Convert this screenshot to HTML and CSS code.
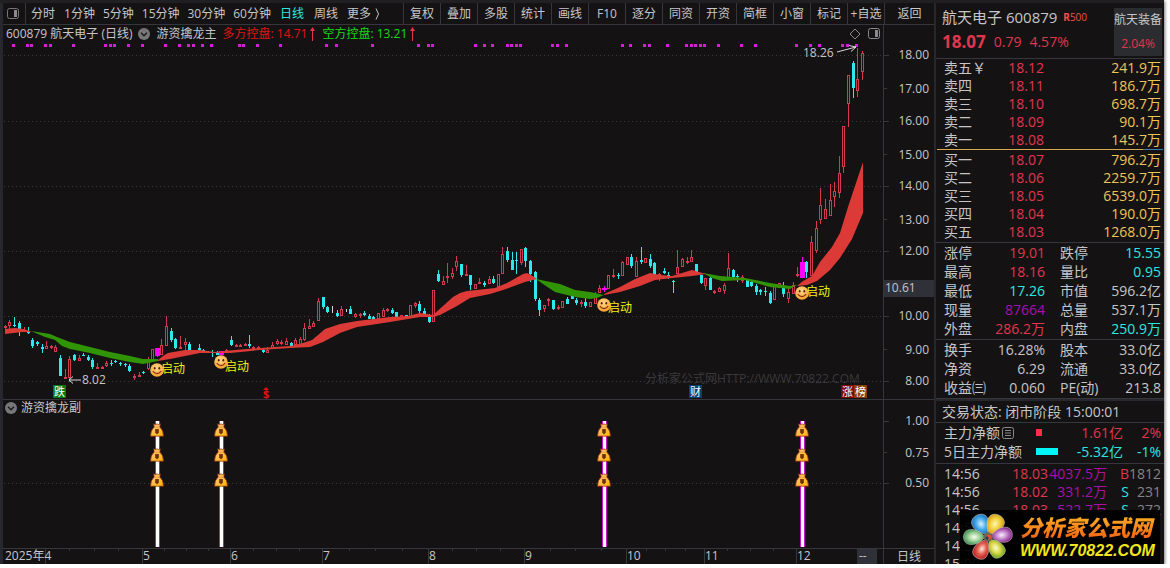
FILE: index.html
```html
<!DOCTYPE html>
<html lang="zh-CN">
<head>
    <meta charset="utf-8">
    <title>航天电子 600879</title>
    <link rel="stylesheet" href="styles.css">
</head>
<body>
    <!-- shared icons -->
    <svg class="defs" width="0" height="0">
        <defs>
            <radialGradient id="face-fill" cx="45%" cy="35%" r="65%">
                <stop offset="0" stop-color="#ffd98a"/>
                <stop offset="1" stop-color="#f7a02c"/>
            </radialGradient>
            <linearGradient id="bag-fill" x1="0" y1="0" x2="1" y2="1">
                <stop offset="0" stop-color="#ffc98a"/>
                <stop offset="1" stop-color="#ffb400"/>
            </linearGradient>
            <symbol id="face" viewBox="0 0 14 14">
                <circle cx="7" cy="7" r="6.8" fill="url(#face-fill)"/>
                <ellipse cx="4.7" cy="5.2" rx="0.9" ry="1.3" fill="#5a1d10"/>
                <ellipse cx="9.3" cy="5.2" rx="0.9" ry="1.3" fill="#5a1d10"/>
                <path d="M2.8 8.2 Q7 13 11.2 8.2" fill="none" stroke="#8a2a10" stroke-width="1.1"/>
            </symbol>
            <symbol id="bag" viewBox="0 0 14 14">
                <path d="M3.5 0.8 L5.5 1.6 L7 0.8 L8.5 1.6 L10.5 0.8 L9.8 4 Q13.5 7 13.5 13.2 L0.5 13.2 Q0.5 7 4.2 4 Z" fill="url(#bag-fill)" stroke="#8c1c08" stroke-width="0.7"/>
                <path d="M4.8 4.2 H9.3" stroke="#e08a40" stroke-width="0.7"/>
                <path d="M5 6 H9 V9.5 L7 11.5 L5 9.5 Z" fill="#8c4a12"/>
                <path d="M7 6.5 V10.5" stroke="#4a1c04" stroke-width="1"/>
            </symbol>
            <symbol id="toggle" viewBox="0 0 12 12">
                <circle cx="6" cy="6" r="6" fill="#77777a"/>
                <path d="M3 4.7 L6 7.7 L9 4.7" fill="none" stroke="#1b1b1c" stroke-width="1.4"/>
            </symbol>
            <symbol id="up" viewBox="0 0 7 14">
                <path d="M3.5 0 L6 4 H4 V14 H3 V4 H1 Z" fill="#e8334a"/>
            </symbol>
        </defs>
    </svg>

    <div class="app">
        <div class="main">
            <div class="toolbar">
                <button class="layout-btn" aria-label="布局"><svg width="13" height="12" viewBox="0 0 13 12"><rect x="0.5" y="0.5" width="11" height="10" rx="2" fill="none" stroke="#77777a"/><rect x="7" y="2" width="3" height="7" fill="#8c8c90"/></svg></button>
                <nav class="periods">
                    <button class="short">分时</button>
                    <button>1分钟</button>
                    <button>5分钟</button>
                    <button>15分钟</button>
                    <button>30分钟</button>
                    <button>60分钟</button>
                    <button class="short active">日线</button>
                    <button class="short">周线</button>
                    <button>更多<svg width="10" height="14" viewBox="0 0 10 14"><path d="M5 1.5 L7.5 7 L5 12.5" fill="none" stroke="#c6c6c8"/></svg></button>
                </nav>
                <div class="tools">
                    <button>复权</button>
                    <button>叠加</button>
                    <button>多股</button>
                    <button>统计</button>
                    <button>画线</button>
                    <button>F10</button>
                    <button>逐分</button>
                    <button>同资</button>
                    <button>开资</button>
                    <button>简框</button>
                    <button>小窗</button>
                    <button>标记</button>
                    <button>+自选</button>
                    <button class="back">返回</button>
                </div>
            </div>

            <div class="pane">
                <div class="plot">
                    <div class="info">
                        <span>600879 航天电子 (日线)</span>
                        <svg class="toggle"><use href="#toggle"/></svg>
                        <span>游资擒龙主</span>
                        <span class="long">多方控盘: 14.71<svg class="up"><use href="#up"/></svg></span>
                        <span class="bear">空方控盘: 13.21<svg class="up"><use href="#up"/></svg></span>
                        <svg class="info-icons" width="31" height="12" viewBox="0 0 31 12"><path d="M6 1 L11 6 L6 11 L1 6 Z" fill="none" stroke="#8a8a8c"/><rect x="19.5" y="0.5" width="11" height="10" rx="2" fill="none" stroke="#8a8a8c"/><rect x="26" y="2" width="3" height="7" fill="#8a8a8c"/></svg>
                    </div>
                    <svg class="chart" viewBox="3 43 880 356">
                        <g class="grid">
                            <path d="M4 55.5H883M4 121.5H883M4 186.5H883M4 251.5H883M4 316.5H883M4 381.5H883"/>
                        </g>
                        <text class="watermark" x="645" y="383">分析家公式网HTTP://WWW.70822.COM</text>
                        <g id="dots" fill="#d41fd4"></g>
                        <g id="candles" shape-rendering="crispEdges"></g>
                        <g class="band-up">
                            <path d="M5 329 L15 328 L24 329 L32 332 L22 332 L5 334Z"/>
                            <path d="M158 360 L163 356 L168 353 L185 350 L200 350 L215 352 L235 350 L260 348 L290 346 L303 343 L312 340 L318 335 L325 329 L340 324 L357 321 L390 317 L408 316 L420 313 L433 315 L443 306 L453 297 L460 293 L467 291 L495 288 L507 283 L523 274 L527 273 L531 275 L537 279 L525 282 L503 290 L490 294 L470 298 L457 306 L440 315 L433 317 L420 317 L390 322 L357 327 L340 333 L323 342 L310 347 L290 348 L260 350 L230 353 L200 353 L185 356 L170 359 L158 361Z"/>
                            <path d="M604 294 L620 287 L635 279 L650 273 L660 275 L672 276 L692 270 L706 274 L692 276 L672 278 L655 280 L640 286 L620 292 L604 295Z"/>
                            <path d="M797 286 L803 281 L812 276 L820 262 L832 247 L840 233 L848 207 L863 162 L863 213 L852 239 L840 258 L830 270 L817 281 L807 285Z"/>
                        </g>
                        <g class="band-down">
                            <path d="M31 331 L50 334 L57 337 L70 342 L90 347 L110 352 L130 356 L143 359 L158 359 L158 361 L143 364 L130 362 L110 358 L90 353 L70 349 L62 346 L55 340 L45 337Z"/>
                            <path d="M536 279 L560 284 L575 290 L590 292 L604 295 L597 298 L590 299 L575 297 L555 292 L543 284Z"/>
                            <path d="M703 273 L720 276 L745 278 L770 283 L790 286 L797 285 L790 289 L770 287 L745 280 L722 281 L712 278Z"/>
                        </g>
                        <g id="signals"></g>
                        <text x="803" y="57">18.26</text>
                        <path class="pointer" d="M837 52 L856 47 M849 45.500 L856 47 L851 51.500"/>
                        <text x="82" y="384">8.02</text>
                        <path class="pointer" d="M81 380 H69 M73 376.500 L69 380 L73 383.500"/>
                        <g class="tags">
                            <rect x="53" y="385" width="13" height="13" fill="#067a0c"/><text x="54" y="396">跌</text>
                            <rect x="689" y="385" width="13" height="13" fill="#0d3d70"/><text x="690" y="396">财</text>
                            <rect x="841" y="385" width="13" height="13" fill="#7a0a0a"/><text x="842" y="396">涨</text>
                            <rect x="854" y="385" width="13" height="13" fill="#8a3c0a"/><text x="855" y="396">榜</text>
                            <path d="M263 390 L266 387 L269 390Z" fill="#e01212"/><text class="dollar" x="263" y="398">$</text>
                        </g>
                    </svg>
                </div>
                <svg class="axis" viewBox="884 25 50 374">
                    <path class="ticks" d="M884 55.5h5M884 88.500h3M884 121.500h5M884 154.500h3M884 186.500h5M884 219.500h3M884 251.500h5M884 316.500h5M884 349.500h3M884 381.500h5"/>
                    <rect x="884" y="280" width="50" height="17" fill="#303039"/>
                    <text x="885" y="292">10.61</text>
                    <g text-anchor="end">
                        <text x="929" y="59">18.00</text>
                        <text x="929" y="93">17.00</text>
                        <text x="929" y="125">16.00</text>
                        <text x="929" y="159">15.00</text>
                        <text x="929" y="190">14.00</text>
                        <text x="929" y="224">13.00</text>
                        <text x="929" y="255">12.00</text>
                        <text x="929" y="320">10.00</text>
                        <text x="929" y="354">9.00</text>
                        <text x="929" y="385">8.00</text>
                    </g>
                </svg>
            </div>

            <div class="pane sub">
                <div class="plot">
                    <div class="info">
                        <svg class="toggle"><use href="#toggle"/></svg>
                        <span>游资擒龙副</span>
                    </div>
                    <svg class="chart" viewBox="3 416 880 132">
                        <g class="grid"><path d="M4 483.500H883"/></g>
                        <g id="bars" shape-rendering="crispEdges"></g>
                        <g id="bags"></g>
                    </svg>
                </div>
                <svg class="axis" viewBox="884 400 50 148">
                    <path class="ticks" d="M884 421.500h5M884 452.500h3M884 483.500h5"/>
                    <g text-anchor="end">
                        <text x="929" y="425">1.00</text>
                        <text x="929" y="457">0.75</text>
                        <text x="929" y="487">0.50</text>
                    </g>
                </svg>
            </div>

            <div class="pane dates">
                <div class="plot">
                    <svg class="chart" viewBox="3 549 880 15">
                        <path class="ticks" d="M45.500 549v15M142.500 549v15M230.500 549v15M322.500 549v15M428.500 549v15M524.500 549v15M626.500 549v15M704.500 549v15M796.500 549v15"/>
                        <path class="ticks" d="M69.500 549v2M94.500 549v2M118.500 549v2M164.500 549v2M186.500 549v2M208.500 549v2M253.500 549v2M276.500 549v2M299.500 549v2M349.500 549v2M375.500 549v2M402.500 549v2M452.500 549v2M476.500 549v2M500.500 549v2M550.500 549v2M575.500 549v2M601.500 549v2M646.500 549v2M665.500 549v2M685.500 549v2M727.500 549v2M750.500 549v2M773.500 549v2"/>
                        <rect x="857" y="549" width="20" height="15" fill="#303039"/>
                        <text x="5" y="560">2025年4</text>
                        <text x="143" y="560">5</text>
                        <text x="231" y="560">6</text>
                        <text x="323" y="560">7</text>
                        <text x="429" y="560">8</text>
                        <text x="525" y="560">9</text>
                        <text x="627" y="560">10</text>
                        <text x="705" y="560">11</text>
                        <text x="797" y="560">12</text>
                        <text x="859" y="560">--</text>
                    </svg>
                </div>
                <div class="axis period">日线</div>
            </div>
        </div>

        <div class="quote">
            <div class="head">
                <div class="stock">
                    <div class="name">航天电子 600879 <small><b>R</b>500</small></div>
                    <div class="price"><b>18.07</b><span>0.79</span><span>4.57%</span></div>
                </div>
                <div class="sector">
                    <div>航天装备</div>
                    <div class="red">2.04%</div>
                </div>
            </div>

            <table class="book sell">
                <tr><th>卖五￥</th><td class="red">18.12</td><td class="vol">241.9万</td></tr>
                <tr><th>卖四</th><td class="red">18.11</td><td class="vol">186.7万</td></tr>
                <tr><th>卖三</th><td class="red">18.10</td><td class="vol">698.7万</td></tr>
                <tr><th>卖二</th><td class="red">18.09</td><td class="vol">90.1万</td></tr>
                <tr><th>卖一</th><td class="red">18.08</td><td class="vol">145.7万</td></tr>
            </table>
            <div class="ratio"><i></i></div>
            <table class="book buy">
                <tr><th>买一</th><td class="red">18.07</td><td class="vol">796.2万</td></tr>
                <tr><th>买二</th><td class="red">18.06</td><td class="vol">2259.7万</td></tr>
                <tr><th>买三</th><td class="red">18.05</td><td class="vol">6539.0万</td></tr>
                <tr><th>买四</th><td class="red">18.04</td><td class="vol">190.0万</td></tr>
                <tr><th>买五</th><td class="red">18.03</td><td class="vol">1268.0万</td></tr>
            </table>

            <table class="stats">
                <tr><th>涨停</th><td class="red">19.01</td><th>跌停</th><td class="cyan">15.55</td></tr>
                <tr><th>最高</th><td class="red">18.16</td><th>量比</th><td class="cyan">0.95</td></tr>
                <tr><th>最低</th><td class="cyan">17.26</td><th>市值</th><td>596.2亿</td></tr>
                <tr><th>现量</th><td class="purple">87664</td><th>总量</th><td>537.1万</td></tr>
                <tr><th>外盘</th><td class="red">286.2万</td><th>内盘</th><td class="cyan">250.9万</td></tr>
            </table>
            <table class="stats">
                <tr><th>换手</th><td>16.28%</td><th>股本</th><td>33.0亿</td></tr>
                <tr><th>净资</th><td>6.29</td><th>流通</th><td>33.0亿</td></tr>
                <tr><th>收益㈢</th><td>0.060</td><th>PE(动)</th><td>213.8</td></tr>
            </table>

            <div class="status">交易状态: 闭市阶段 15:00:01</div>

            <table class="flow">
                <tr><th>主力净额<svg width="12" height="12" viewBox="0 0 12 12"><rect x="0.5" y="0.5" width="11" height="11" rx="2" fill="none" stroke="#8a8a8c"/><path d="M3 3.500H9M3 6H9M3 8.500H9" stroke="#8a8a8c"/></svg></th><td class="mark"><i class="in"></i></td><td class="red">1.61亿</td><td class="red">2%</td></tr>
                <tr><th>5日主力净额</th><td class="mark"><i class="out"></i></td><td class="cyan">-5.32亿</td><td class="cyan">-1%</td></tr>
            </table>

            <div class="trades">
                <table>
                    <tr><th>14:56</th><td class="red">18.03</td><td class="purple">4037.5万</td><td class="red side">B</td><td class="count">1812</td></tr>
                    <tr><th>14:56</th><td class="red">18.02</td><td class="purple">331.2万</td><td class="cyan side">S</td><td class="count">231</td></tr>
                    <tr><th>14:56</th><td class="red">18.03</td><td class="purple">522.7万</td><td class="cyan side">S</td><td class="count">272</td></tr>
                    <tr><th>14:56</th><td></td><td></td><td></td><td></td></tr>
                    <tr><th>14:57</th><td></td><td></td><td></td><td></td></tr>
                    <tr><th>15:00</th><td></td><td></td><td></td><td></td></tr>
                </table>
                <div class="brand">
                    <svg width="56" height="52" viewBox="-28 -26 56 52">
                        <defs>
                            <radialGradient id="p1" cx="50%" cy="45%" r="55%"><stop offset="0" stop-color="#d8f0ff"/><stop offset="0.5" stop-color="#4aacea"/><stop offset="1" stop-color="#1068b8"/></radialGradient>
                            <radialGradient id="p2" cx="50%" cy="45%" r="55%"><stop offset="0" stop-color="#fff8b0"/><stop offset="0.5" stop-color="#f0d040"/><stop offset="1" stop-color="#d09010"/></radialGradient>
                            <radialGradient id="p3" cx="50%" cy="50%" r="55%"><stop offset="0" stop-color="#fbeeff"/><stop offset="0.5" stop-color="#c080c8"/><stop offset="1" stop-color="#7c1880"/></radialGradient>
                            <radialGradient id="p4" cx="50%" cy="50%" r="55%"><stop offset="0" stop-color="#fffbd0"/><stop offset="0.5" stop-color="#d8d848"/><stop offset="1" stop-color="#6ca020"/></radialGradient>
                            <radialGradient id="p5" cx="50%" cy="50%" r="55%"><stop offset="0" stop-color="#ffe4dc"/><stop offset="0.5" stop-color="#e06050"/><stop offset="1" stop-color="#b81820"/></radialGradient>
                            <radialGradient id="p6" cx="50%" cy="50%" r="55%"><stop offset="0" stop-color="#f8fff0"/><stop offset="0.5" stop-color="#a0d098"/><stop offset="1" stop-color="#308850"/></radialGradient>
                        </defs>
                        <g stroke="#d8d8c8" stroke-width="0.5">
                            <path d="M0 -3 C-5 -7 -10 -13 -8 -20 C-5 -26 5 -26 8 -20 C10 -13 5 -7 0 -3Z" transform="rotate(-28)" fill="url(#p1)"/>
                            <path d="M0 -3 C-5 -7 -10 -13 -8 -20 C-5 -26 5 -26 8 -20 C10 -13 5 -7 0 -3Z" transform="rotate(28)" fill="url(#p2)"/>
                            <path d="M0 -3 C-5 -7 -9 -13 -7 -20 C-5 -26 5 -26 7 -20 C9 -13 5 -7 0 -3Z" transform="rotate(82)" fill="url(#p3)"/>
                            <path d="M0 -3 C-5 -7 -9 -13 -7 -20 C-5 -25 5 -25 7 -20 C9 -13 5 -7 0 -3Z" transform="rotate(145)" fill="url(#p4)"/>
                            <path d="M0 -3 C-5 -7 -9 -13 -7 -20 C-5 -25 5 -25 7 -20 C9 -13 5 -7 0 -3Z" transform="rotate(207)" fill="url(#p5)"/>
                            <path d="M0 -3 C-5 -7 -9 -13 -7 -20 C-5 -26 5 -26 7 -20 C9 -13 5 -7 0 -3Z" transform="rotate(270)" fill="url(#p6)"/>
                        </g>
                        <circle r="4.500" fill="#6a6a58"/>
                        <circle cx="1" cy="0" r="2.500" fill="#e05030"/>
                        <circle cx="-1" cy="1" r="1.500" fill="#203860"/>
                    </svg>
                    <div class="brand-text">
                        <div class="brand-name">分析家公式网</div>
                        <div class="brand-url">WWW.70822.COM</div>
                    </div>
                </div>
            </div>
        </div>
    </div>
    <script src="script.js"></script>
</body>
</html>
```

FILE: styles.css
```css
* { margin: 0; padding: 0; box-sizing: border-box; }
body { background: #fff; color: #c6c6c8; font: 12px/16px "Open Sans", "Noto Sans CJK SC", sans-serif; overflow: hidden; }
button { background: none; border: none; color: inherit; font: inherit; white-space: nowrap; cursor: pointer; }
button:hover { color: #fff; }
svg { display: block; flex: none; }
svg text { fill: #c6c6c8; }
.defs { position: absolute; }
.red { color: #e0364e; }
.cyan { color: #2ee6e0; }
.purple { color: #a80fae; }

.app { display: grid; grid-template-columns: minmax(0, 1fr) 228px; height: calc(100vh - 4px); margin-right: 6px; border-top: 3px solid #202022; background: #141213; box-shadow: 1px 1px 3px #777; }
.main { border-left: 3px solid #27282d; border-right: 2px solid #27282d; }

/* toolbar */
.toolbar { display: flex; height: 22px; border-bottom: 1px solid #36373d; }
.layout-btn { width: 23px; padding-left: 4px; border-right: 1px solid #36373d; }
.periods { display: flex; flex: 1; }
.periods button { display: flex; align-items: center; padding: 0 4px; }
.periods .short { padding: 0 5px; }
.periods .active { color: #2ee6e0; }
.tools { display: flex; }
.tools button { width: 37px; border-left: 1px solid #36373d; text-align: center; }
.tools .back { width: 50px; }

/* charts */
.pane { display: flex; border-bottom: 1px solid #36373d; }
.plot { flex: 1; min-width: 0; }
.chart { width: 100%; height: auto; overflow: visible; }
.axis { width: 51px; border-left: 1px solid #36373d; }
.info { display: flex; align-items: center; height: 18px; padding: 0 3px; gap: 6px; white-space: nowrap; }
.sub .info { height: 16px; gap: 4px; padding: 0 2px; }
.toggle { width: 12px; height: 12px; }
.long, .bear { display: flex; align-items: center; gap: 2px; }
.long { color: #e01414; }
.bear { color: #14dc14; }
.up { width: 7px; height: 14px; }
.info-icons { margin-left: auto; }
.dates { border-bottom: none; }
.period { height: 15px; line-height: 15px; text-align: center; }
.grid path { fill: none; stroke: #3c3c40; stroke-dasharray: 1 3; }
.ticks { fill: none; stroke: #36373d; }
.band-up { fill: #dc3a37; }
.band-down { fill: #319405; }
.pointer { fill: none; stroke: #d8d8d8; }
svg .watermark { fill: #39393b; }
.tags text { fill: #fff; font-size: 11px; }
.tags .dollar { fill: #e01212; font-weight: bold; }
svg .signal { fill: #f4f014; }

/* quote panel */
.quote { display: flex; flex-direction: column; min-height: 0; font-size: 14px; line-height: 18px; }
.head { display: flex; justify-content: space-between; height: 56px; padding: 5px 2px 2px 6px; border-bottom: 1px solid #36373d; }
.name { font-size: 15px; white-space: nowrap; }
.name small { margin-left: 2px; color: #f0504a; font-size: 10px; vertical-align: 2px; }
.price { display: flex; align-items: center; gap: 8px; height: 32px; color: #e0364e; }
.price b { font-size: 17px; }
.sector { width: 48px; background: #2a2c2f; font-size: 12px; line-height: 24px; text-align: center; }
table { width: 100%; table-layout: fixed; }
th { padding: 0; font-weight: normal; text-align: left; white-space: nowrap; }
td { padding: 0; text-align: right; white-space: nowrap; }
.book, .stats, .flow, .trades table { border-collapse: separate; border-spacing: 0; padding: 0 3px 0 8px; }
.book tr { height: 18px; }
.book th, .book td:nth-child(2) { width: 50px; }
.book .vol { color: #edc458; }
.ratio { height: 1px; margin: 0 1px 1px; background: #d8a850; }
.ratio i { display: block; width: 9%; height: 1px; margin-left: auto; background: #3c7ab0; }
.buy { margin-bottom: 1px; }
.stats { padding-bottom: 1px; border-bottom: 1px solid #36373d; }
.buy + .stats { border-top: 1px solid #36373d; }
.stats tr, .flow tr { height: 19px; }
.stats th { width: 49px; }
.stats th:nth-child(3) { width: 60px; padding-left: 15px; }
.stats td:nth-child(2) { width: 52px; }
.status { height: 24px; padding: 1px 6px 0; border-top: 2px solid #27282d; border-bottom: 1px solid #36373d; line-height: 20px; }
.flow { padding-bottom: 2px; border-bottom: 1px solid #36373d; }
.flow th { width: 90px; }
.flow th svg { display: inline-block; margin-left: 2px; vertical-align: -1px; }
.flow .mark { width: 30px; text-align: left; }
.flow td:nth-child(3) { width: 59px; }
.mark i { display: block; height: 7px; margin-left: 2px; }
.in { width: 6px; background: #ff2c4c; }
.out { width: 22px; background: #00f6f6; }
.trades { position: relative; flex: 1; padding-top: 1px; overflow: hidden; }
.trades tr { height: 18px; }
.trades th { width: 50px; }
.trades td:nth-child(2) { width: 54px; }
.trades td:nth-child(3) { width: 59px; }
.trades .side { width: 22px; }
.count { color: #848486; }

/* site badge over the trade list */
.brand { position: absolute; right: 4px; bottom: 0; display: flex; align-items: center; width: 200px; height: 54px; background: rgba(0, 0, 0, 0.94); }
.brand-name { background: linear-gradient(#ffb828, #f05c10); -webkit-background-clip: text; color: transparent; font-size: 22px; font-weight: 900; font-style: italic; line-height: 28px; }
.brand-text { padding-left: 4px; white-space: nowrap; }
.brand-url { color: #f4e41c; font: italic bold 16px/20px "Liberation Sans", sans-serif; }
```

FILE: script.js
```js
var RED = '#d23a50', CYAN = '#2ee8ee', MAGENTA = '#ff00ff', WHITE = '#d8d8d8';
var colors = { r: RED, c: CYAN, m: MAGENTA, w: WHITE };

// type, x, high, body top, body bottom, low
var candles = 'r 5 325 326 328 329,r 9 320 322 326 329,c 14 317 325 326 327,c 19 321 323 331 336,r 24 327 330 332 332,c 28 327 331 333 334,' +
    'c 32 338 340 346 348,c 37 341 342 344 346,c 42 344 347 349 353,r 46 341 346 349 349,r 51 345 346 348 349,r 55 345 347 352 352,' +
    'c 60 355 358 376 376,r 65 369 377 378 378,r 69 356 359 378 382,c 74 354 355 360 361,r 79 355 358 361 361,c 83 353 355 356 356,' +
    'c 88 355 357 360 361,c 92 358 360 367 369,r 97 363 367 368 369,r 102 366 367 368 368,r 106 361 363 366 367,c 111 360 363 364 366,' +
    'c 115 360 361 362 363,c 120 362 363 364 366,c 125 363 364 365 367,c 129 364 366 371 372,r 134 374 376 378 380,r 139 372 375 376 376,' +
    'c 143 371 372 373 374,r 148 357 361 369 370,r 152 349 349 361 361,m 157 348 348 356 357,r 161 339 345 355 355,r 166 316 326 346 346,' +
    'c 171 328 331 340 342,c 175 338 339 348 349,r 180 336 347 349 349,r 185 338 342 345 350,c 189 342 344 350 350,c 199 344 348 350 350,' +
    'c 203 349 350 352 352,c 208 351 352 353 353,c 212 350 352 353 357,c 217 351 353 355 355,m 221 351 351 355 355,r 226 349 350 352 352,' +
    'c 231 336 340 345 346,r 236 344 345 346 347,r 240 344 345 347 347,r 245 343 344 345 346,c 249 335 344 346 348,r 253 346 347 348 349,' +
    'r 258 346 347 349 349,c 263 349 350 352 353,r 267 347 350 353 353,r 272 342 345 348 348,r 277 339 341 344 345,r 281 340 342 344 345,' +
    'r 286 338 341 345 345,c 291 342 343 346 346,r 295 338 340 345 345,r 300 337 339 345 345,r 304 323 328 340 341,r 309 319 326 329 329,' +
    'r 313 321 323 327 327,r 318 298 301 321 321,c 323 297 297 307 309,c 327 306 307 312 313,w 332 306 312 313 313,c 337 310 313 316 317,' +
    'r 341 306 309 316 316,w 346 309 310 311 312,c 350 306 309 314 314,r 355 313 314 317 318,r 360 313 314 316 318,c 364 311 313 315 316,' +
    'c 369 314 316 319 319,c 373 316 317 320 321,r 378 313 313 319 319,r 383 308 310 317 317,r 387 308 309 311 312,c 392 308 310 313 314,' +
    'c 396 312 312 318 318,r 401 315 315 318 318,c 406 315 315 317 317,r 410 305 305 317 317,r 415 302 303 306 308,c 419 301 304 311 313,' +
    'c 424 308 311 314 315,c 429 314 317 322 323,r 433 290 290 322 322,c 438 270 274 281 282,r 443 276 281 285 285,r 447 263 276 277 283,' +
    'r 452 268 273 277 279,r 456 256 261 267 271,c 461 264 264 275 277,r 466 265 274 276 276,c 470 275 275 285 290,r 475 284 284 289 289,' +
    'r 479 278 282 284 284,c 484 281 283 285 287,r 489 276 279 284 284,c 493 276 279 283 284,r 498 274 274 287 287,r 502 247 254 274 274,' +
    'c 507 247 251 260 262,c 512 252 260 270 270,c 516 252 260 261 274,r 521 249 249 263 265,c 525 247 248 261 267,c 530 260 261 274 282,' +
    'c 535 271 272 299 301,c 539 298 300 310 316,r 544 305 305 309 312,r 548 298 299 300 306,c 553 300 300 309 310,r 558 305 307 309 310,' +
    'r 562 301 301 308 308,c 567 297 299 304 304,c 572 295 296 299 299,c 576 298 300 303 305,r 581 300 302 304 307,c 585 297 302 306 308,' +
    'r 590 302 302 307 307,r 595 292 294 304 304,r 599 285 288 293 293,m 604 286 288 290 292,r 608 275 275 289 289,r 613 269 275 277 278,' +
    'c 618 273 275 276 279,r 622 261 262 276 276,r 627 257 257 265 265,c 631 254 257 266 268,r 636 257 261 277 277,c 641 247 260 262 264,' +
    'r 645 258 258 263 263,c 650 254 259 266 268,c 654 262 263 276 277,r 659 273 274 279 281,c 664 268 271 273 274,c 668 272 275 276 279,' +
    'c 673 280 281 282 293,r 677 250 267 274 274,r 682 258 259 267 267,r 687 257 261 262 264,r 691 250 257 262 262,c 696 264 264 273 275,' +
    'c 701 275 275 283 284,r 705 278 278 286 290,c 710 277 278 290 290,r 714 290 291 293 294,r 719 287 288 292 292,r 724 283 285 291 294,' +
    'r 728 253 268 280 280,c 733 269 270 277 278,c 737 274 276 277 282,r 742 275 277 281 283,c 747 280 280 287 287,c 751 281 282 286 287,' +
    'c 756 284 286 292 295,c 760 289 290 292 295,c 765 287 291 292 296,c 770 291 293 303 304,r 774 285 285 300 300,r 779 283 283 288 288,' +
    'c 783 282 286 294 297,r 788 287 292 299 303,r 793 282 285 294 294,r 797 267 274 275 277,m 802 257 262 278 278,c 806 261 262 272 278,' +
    'r 811 236 242 276 276,r 816 221 228 251 253,r 820 188 205 220 224,r 825 199 209 219 219,r 830 184 200 216 216,r 834 182 191 197 207,' +
    'r 839 156 173 193 198,r 843 126 126 167 173,r 848 75 75 104 127,c 853 61 63 88 98,r 857 48 79 91 97,r 862 51 53 72 80';

var dots = [13, 27, 31, 45, 50, 73, 105, 110, 114, 128, 142, 165, 179, 188, 193, 202, 211, 239, 243, 257, 280, 326, 336, 372, 418,
    428, 432, 475, 484, 492, 507, 511, 516, 520, 552, 557, 566, 622, 630, 644, 649, 667, 686, 691, 695, 700, 704, 718, 741, 755,
    796, 810, 819, 842, 847, 856];

function rect(x, y, w, h, fill, stroke) {
    return '<rect x="' + x + '" y="' + y + '" width="' + w + '" height="' + h + '"' +
        (fill ? ' fill="' + fill + '"' : '') + (stroke ? ' stroke="' + stroke + '"' : '') + '/>';
}

function icon(id, x, y, size) {
    return '<use href="#' + id + '" x="' + x + '" y="' + y + '" width="' + size + '" height="' + size + '"/>';
}

document.getElementById('candles').innerHTML = candles.split(',').map(function (row) {
    var p = row.split(' ');
    var color = colors[p[0]];
    var x = +p[1], high = +p[2], top = +p[3], bottom = +p[4], low = +p[5];
    if (p[0] === 'r') {
        return rect(x, high, 1, top - high, color) + rect(x, bottom, 1, low - bottom, color) +
            rect(x - 0.5, top + 0.5, 2, Math.max(bottom - top - 1, 1), 'none', color);
    }
    if (p[0] === 'w') {
        return rect(x, high, 1, low - high, color);
    }
    var w = p[0] === 'm' ? 5 : 3;
    return rect(x, high, 1, low - high, color) + rect(x - (w - 1) / 2, top, w, bottom - top, color);
}).join('');

document.getElementById('dots').innerHTML = dots.map(function (x) {
    return rect(x - 1, 44, 3, 3);
}).join('');

// face x, face y, label x, label y
var signals = [[157, 370, 161, 373], [221, 362, 225, 371], [604, 305, 608, 312], [802, 293, 806, 296]];
document.getElementById('signals').innerHTML = signals.map(function (s) {
    return '<text class="signal" x="' + s[2] + '" y="' + s[3] + '">启动</text>' + icon('face', s[0] - 7, s[1] - 7, 14);
}).join('');

document.getElementById('bars').innerHTML = signals.map(function (s) {
    return rect(s[0] - 2, 421, 5, 126, '#c814c8') + rect(s[0] - 1, 421, 3, 126, '#fff');
}).join('');

document.getElementById('bags').innerHTML = signals.map(function (s) {
    return [430, 455, 480].map(function (y) { return icon('bag', s[0] - 7, y - 7, 14); }).join('');
}).join('');
```
